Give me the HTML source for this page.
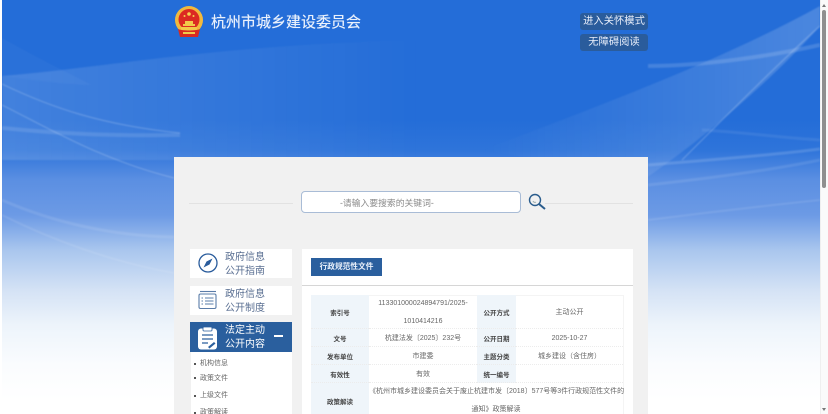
<!DOCTYPE html>
<html lang="zh-CN"><head><meta charset="utf-8"><title>杭州市城乡建设委员会</title>
<style>
*{box-sizing:border-box;margin:0;padding:0}
html,body{width:828px;height:414px;overflow:hidden;background:#fff}
body{position:relative;font-family:"Liberation Sans","Noto Sans CJK SC",sans-serif;color:#555}
.a{position:absolute;white-space:nowrap}
.bg{left:2px;top:0;width:818px;height:414px;background:linear-gradient(to bottom,#246dd8 0,#246dd8 120px,#2e74da 150px,#5b8fe2 180px,#6c9ae5 215px,#a9c6ee 250px,#d4e2f5 290px,#edf4fb 325px,#fafcfe 365px,#fff 400px)}
.panel{left:174px;top:157px;width:474px;height:257px;background:#f1f1f1}
.card{background:#fff}
.t{font-size:10px;line-height:14px;color:#5a6f92;left:225px}
.sub{left:200px;font-size:7px;color:#666}
.dot{left:194px;width:2px;height:2px;background:#555}
.cell{display:flex;align-items:center;justify-content:center;text-align:center;font-size:7px;color:#666;border-bottom:1px dotted #ececec}
.v{padding-top:1px}
.lab{background:#eff5fa;font-size:6.5px;color:#444;font-weight:bold}
.hb{background:#2a5c9c;border-radius:3px;color:#e8eefa;font-size:10.3px;text-align:center;height:17px;line-height:18px;width:68px;left:580px}
</style></head><body>
<div class="a bg"></div>
<svg class="a" style="left:2px;top:0;filter:blur(.7px)" width="818" height="300" viewBox="0 0 818 300" fill="none">
<defs>
<linearGradient id="l" x1="0" x2="1" y1="0" y2="0"><stop offset="0" stop-color="#fff" stop-opacity=".14"/><stop offset="1" stop-color="#fff" stop-opacity="0"/></linearGradient>
<linearGradient id="r" x1="0" x2="1" y1="0" y2="0"><stop offset="0" stop-color="#fff" stop-opacity="0"/><stop offset="1" stop-color="#fff" stop-opacity=".18"/></linearGradient>
</defs>
<path d="M0 76C100 68 220 44 420 40V160H0Z" fill="url(#l)"/>
<path d="M0 38C30 55 60 70 90 85C70 85 30 80 0 76Z" fill="#fff" opacity=".03"/>
<path d="M0 84C50 108 100 125 178 133" stroke="#fff" stroke-opacity=".2" stroke-width="1.2"/>
<path d="M0 105C50 130 100 160 172 178" stroke="#fff" stroke-opacity=".2" stroke-width="1.2"/>
<path d="M0 128C60 134 110 136 178 135" stroke="#fff" stroke-opacity=".12" stroke-width="4"/>
<path d="M0 200C50 222 110 236 172 237" stroke="#fff" stroke-opacity=".1" stroke-width="3"/>
<path d="M0 215C50 240 110 262 172 273" stroke="#fff" stroke-opacity=".1" stroke-width="2"/>
<path d="M480 150C600 105 720 60 818 6V26C770 80 700 140 644 178Z" fill="url(#r)"/>
<path d="M680 160C730 110 780 60 818 26" stroke="#fff" stroke-opacity=".22" stroke-width="1.2"/>
<path d="M646 66C700 66 770 56 818 45" stroke="#fff" stroke-opacity=".15" stroke-width="4"/>
<path d="M646 165C710 160 770 155 818 149" stroke="#fff" stroke-opacity=".15" stroke-width="3"/>
<path d="M646 185C710 178 770 170 818 160" stroke="#fff" stroke-opacity=".1" stroke-width="3"/>
<path d="M646 220C710 212 770 205 818 200" stroke="#fff" stroke-opacity=".1" stroke-width="2"/>
<path d="M700 130C740 132 780 138 818 140" stroke="#fff" stroke-opacity=".08" stroke-width="3"/>
</svg>
<svg class="a" style="left:174px;top:6px" width="30" height="32" viewBox="0 0 30 32">
<circle cx="15" cy="14" r="14" fill="#f2b93c"/><circle cx="15" cy="13.5" r="10.5" fill="#dc2a22"/>
<path d="M7 21h16v3H7z" fill="#f2c84a"/><path d="M4 23c4 2 18 2 22 0l-2 8H6z" fill="#d92a20"/>
<path d="M9 26h12v2H9z" fill="#f2c84a"/><circle cx="15" cy="8" r="1.8" fill="#f6d24e"/><circle cx="10.5" cy="10" r="1" fill="#f6d24e"/><circle cx="19.5" cy="10" r="1" fill="#f6d24e"/>
<path d="M9 18h12v2H9zM11 15h8v3h-8z" fill="#f2c84a"/>
</svg>
<div class="a" style="left:211px;top:13px;font-size:15px;line-height:20px;color:#eaf1fc;text-shadow:0 0 .5px #eaf1fc">杭州市城乡建设委员会</div>
<div class="a hb" style="top:13px">进入关怀模式</div>
<div class="a hb" style="top:34px">无障碍阅读</div>
<div class="a panel"></div>
<div class="a" style="left:189px;top:203px;width:104px;height:1px;background:#e2e2e2"></div>
<div class="a" style="left:545px;top:203px;width:88px;height:1px;background:#e2e2e2"></div>
<div class="a" style="left:301px;top:191px;width:220px;height:22px;background:#fff;border:1px solid #a9bcd6;border-radius:4px;font-size:8.8px;line-height:22px;color:#8a8a8a;padding-left:38px">-请输入要搜索的关键词-</div>
<svg class="a" style="left:527px;top:192px" width="20" height="20" viewBox="0 0 20 20" fill="none"><circle cx="8" cy="8" r="5.5" stroke="#2a5c8c" stroke-width="1.4"/><path d="M12 12l6 5" stroke="#2a5c8c" stroke-width="2"/><path d="M6 9a2 2 0 0 0 3 1" stroke="#9aa" stroke-width="1"/></svg>

<div class="a card" style="left:190px;top:249px;width:102px;height:29px"></div>
<svg class="a" style="left:198px;top:253px" width="20" height="20" viewBox="0 0 20 20" fill="none"><circle cx="10" cy="10" r="9" stroke="#2a5c9c" stroke-width="1.3"/><path d="M14.5 5.5L11.5 11.5 8.5 8.5ZM5.5 14.5L8.5 8.5 11.5 11.5Z" fill="#2a5c9c"/></svg>
<div class="a t" style="top:251px">政府信息<br>公开指南</div>
<div class="a card" style="left:190px;top:286px;width:102px;height:29px"></div>
<svg class="a" style="left:198px;top:290px" width="20" height="20" viewBox="0 0 20 20" fill="none" stroke="#5a7ca8" stroke-width="1.1"><path d="M2 1.5h16"/><rect x="1" y="4" width="17" height="14.5" rx="1.5"/><path d="M3.5 8h1.5M7 8h8.5M3.5 11h1.5M7 11h8.5M3.5 14h1.5M7 14h8.5"/></svg>
<div class="a t" style="top:288px">政府信息<br>公开制度</div>
<div class="a card" style="left:191px;top:352px;width:101px;height:62px"></div>
<div class="a" style="left:190px;top:322px;width:102px;height:30px;background:#2a5f9e"></div>
<svg class="a" style="left:197px;top:326px" width="22" height="24" viewBox="0 0 22 24"><rect x="1" y="2.5" width="19" height="21" rx="3" fill="#fff"/><rect x="6" y="1" width="9" height="4" rx="1" fill="#fff" stroke="#2a5f9e" stroke-width=".8"/><path d="M5 9h11M5 13h11M5 17h6" stroke="#2a5f9e" stroke-width="1.3"/><path d="M11 21l6-5 1.5 1.5-6 5z" fill="#2a5f9e"/></svg>
<div class="a t" style="top:324px;color:#fff">法定主动<br>公开内容</div>
<div class="a" style="left:274px;top:335px;width:9px;height:2px;background:#fff"></div>
<i class="a dot" style="top:363px"></i><div class="a sub" style="top:358px">机构信息</div>
<i class="a dot" style="top:377px"></i><div class="a sub" style="top:373px">政策文件</div>
<i class="a dot" style="top:395px"></i><div class="a sub" style="top:390px">上级文件</div>
<i class="a dot" style="top:412px"></i><div class="a sub" style="top:407px">政策解读</div>

<div class="a card" style="left:302px;top:249px;width:331px;height:165px"></div>
<div class="a" style="left:302px;top:285px;width:331px;height:1px;background:#d6d6d6"></div>
<div class="a" style="left:311px;top:258px;width:71px;height:18px;background:#2a5f9e;color:#eaf1fb;font-size:7.7px;font-weight:bold;line-height:18px;text-align:center">行政规范性文件</div>

<div class="a" style="left:311px;top:295px;width:313px;height:119px;background:#fff;border-top:1px solid #f4f4f4;border-right:1px solid #f4f4f4"></div>
<div class="a cell lab" style="left:311px;top:295px;width:58px;height:34px">索引号</div>
<div class="a cell" style="left:369px;top:295px;width:108px;height:34px;line-height:18px;padding-top:3px">113301000024894791/2025-<br>1010414216</div>
<div class="a cell lab" style="left:477px;top:295px;width:39px;height:34px">公开方式</div>
<div class="a cell" style="left:516px;top:295px;width:107px;height:34px">主动公开</div>
<div class="a cell lab" style="left:311px;top:329px;width:58px;height:18px">文号</div>
<div class="a cell v" style="left:369px;top:329px;width:108px;height:18px">杭建法发〔2025〕232号</div>
<div class="a cell lab" style="left:477px;top:329px;width:39px;height:18px">公开日期</div>
<div class="a cell v" style="left:516px;top:329px;width:107px;height:18px">2025-10-27</div>
<div class="a cell lab" style="left:311px;top:347px;width:58px;height:18px">发布单位</div>
<div class="a cell v" style="left:369px;top:347px;width:108px;height:18px">市建委</div>
<div class="a cell lab" style="left:477px;top:347px;width:39px;height:18px">主题分类</div>
<div class="a cell v" style="left:516px;top:347px;width:107px;height:18px">城乡建设（含住房）</div>
<div class="a cell lab" style="left:311px;top:365px;width:58px;height:18px">有效性</div>
<div class="a cell v" style="left:369px;top:365px;width:108px;height:18px">有效</div>
<div class="a cell lab" style="left:477px;top:365px;width:39px;height:18px">统一编号</div>
<div class="a cell" style="left:516px;top:365px;width:107px;height:18px"></div>
<div class="a cell lab" style="left:311px;top:383px;width:58px;height:36px;border:0">政策解读</div>
<div class="a cell" style="left:369px;top:383px;width:254px;height:36px;line-height:18px;border:0;display:block;padding-top:0">《杭州市城乡建设委员会关于废止杭建市发〔2018〕577号等3件行政规范性文件的<br>通知》政策解读</div>

<div class="a" style="left:820px;top:0;width:8px;height:414px;background:#fafafa;border-left:1px solid #efefef"></div>
<div class="a" style="left:822px;top:10px;width:4px;height:178px;background:#8f8f8f;border-radius:2px"></div>
<div class="a" style="left:822px;top:4px;width:0;height:0;border:2px solid transparent;border-bottom:3px solid #777;border-top:0"></div>
<div class="a" style="left:822px;top:408px;width:0;height:0;border:2px solid transparent;border-top:3px solid #777;border-bottom:0"></div>
</body></html>
